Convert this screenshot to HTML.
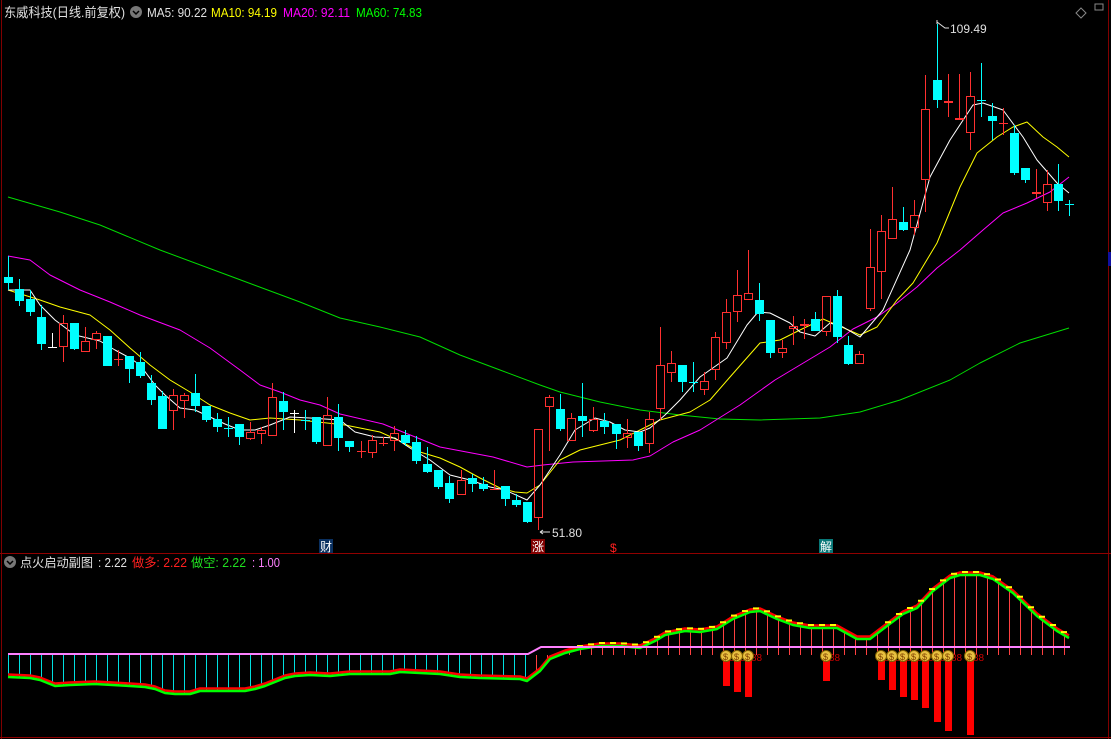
<!DOCTYPE html>
<html><head><meta charset="utf-8"><style>
html,body{margin:0;padding:0;background:#000;width:1111px;height:739px;overflow:hidden}
svg{display:block}
text{font-family:"Liberation Sans","Noto Sans CJK SC",sans-serif}
</style></head><body>
<svg id="s" width="1111" height="739" xmlns="http://www.w3.org/2000/svg">
<rect width="1111" height="739" fill="#000"/>
<line x1="1.5" y1="0" x2="1.5" y2="739" stroke="#800000"/>
<line x1="1108.5" y1="0" x2="1108.5" y2="739" stroke="#800000"/>
<rect x="1108" y="252" width="3" height="14" fill="#1010a0"/>
<line x1="0" y1="553.5" x2="1111" y2="553.5" stroke="#900000"/>
<line x1="0" y1="737.5" x2="1111" y2="737.5" stroke="#900000"/>
<text x="4" y="17" font-size="13" fill="#e0e0e0" textLength="121" lengthAdjust="spacingAndGlyphs">东威科技(日线.前复权)</text>
<circle cx="136" cy="12" r="6" fill="#777"/><path d="M133 11 l3 3 l3 -3" stroke="#000" stroke-width="1.5" fill="none"/>
<text x="147" y="17" font-size="12.5" fill="#e0e0e0" textLength="60" lengthAdjust="spacingAndGlyphs">MA5: 90.22</text>
<text x="211" y="17" font-size="12.5" fill="#ffff00" textLength="66" lengthAdjust="spacingAndGlyphs">MA10: 94.19</text>
<text x="283" y="17" font-size="12.5" fill="#ff00ff" textLength="67" lengthAdjust="spacingAndGlyphs">MA20: 92.11</text>
<text x="356" y="17" font-size="12.5" fill="#00ff00" textLength="66" lengthAdjust="spacingAndGlyphs">MA60: 74.83</text>
<path d="M1081 8 l5 5 l-5 5 l-5 -5z" stroke="#888" fill="none"/>
<rect x="1095" y="4" width="8" height="6" stroke="#888" fill="none"/>
<g id="g"></g>
<text x="950" y="33" font-size="12" fill="#e0e0e0">109.49</text>
<path d="M937 24 v-4 M937 22 l8 6 h4" stroke="#e0e0e0" fill="none"/>
<text x="552" y="537" font-size="12" fill="#e0e0e0">51.80</text>
<path d="M540 532 h10 M540 532 l3 -2 M540 532 l3 2" stroke="#e0e0e0" fill="none"/>
<rect x="319" y="539" width="14" height="14" fill="#0a3060"/><text x="320" y="551" font-size="12" fill="#fff">财</text>
<rect x="531" y="539" width="14" height="14" fill="#800000"/><text x="532" y="551" font-size="12" fill="#fff">涨</text>
<text x="610" y="552" font-size="12" fill="#ff2020">$</text>
<rect x="819" y="539" width="14" height="14" fill="#087878"/><text x="820" y="551" font-size="12" fill="#fff">解</text>
<circle cx="10" cy="562" r="6" fill="#777"/><path d="M7 561 l3 3 l3 -3" stroke="#000" stroke-width="1.5" fill="none"/>
<text x="20" y="567" font-size="12.5" fill="#e0e0e0" textLength="73" lengthAdjust="spacingAndGlyphs">点火启动副图</text>
<text x="98" y="567" font-size="12.5" fill="#e0e0e0" textLength="29" lengthAdjust="spacingAndGlyphs">: 2.22</text>
<text x="132" y="567" font-size="12.5" fill="#ff2020" textLength="55" lengthAdjust="spacingAndGlyphs">做多: 2.22</text>
<text x="191" y="567" font-size="12.5" fill="#20e020" textLength="55" lengthAdjust="spacingAndGlyphs">做空: 2.22</text>
<text x="252" y="567" font-size="12.5" fill="#ff80ff" textLength="28" lengthAdjust="spacingAndGlyphs">: 1.00</text>
</svg>
<script>
var NS="http://www.w3.org/2000/svg",g=document.getElementById('g');
function el(t,a){var e=document.createElementNS(NS,t);for(var k in a)e.setAttribute(k,a[k]);g.appendChild(e);return e;}
var C=[[8,277,283,256,290,'c'],[19,289,301,279,306,'c'],[30,299,312,290,316,'c'],[41,317,344,305,350,'c'],[52,347,348,333,348,'w'],[63,323,347,315,362,'r'],[74,323,349,323,350,'c'],[85,341,352,327,352,'r'],[96,333,340,331,349,'r'],[107,336,366,336,366,'c'],[118,359,360,350,366,'r'],[129,356,369,356,383,'c'],[140,362,376,352,378,'c'],[151,383,400,375,405,'c'],[162,396,429,391,429,'c'],[173,395,411,389,430,'r'],[184,395,401,393,418,'r'],[195,393,406,374,412,'c'],[206,406,420,406,422,'c'],[217,419,427,413,432,'c'],[228,428,429,417,437,'c'],[239,424,437,424,445,'c'],[250,432,439,422,440,'r'],[261,430,434,427,444,'r'],[272,397,436,383,436,'r'],[283,401,412,392,430,'c'],[294,413,414,410,433,'w'],[305,420,421,410,430,'c'],[316,417,442,417,444,'c'],[327,415,446,397,446,'r'],[338,417,438,404,451,'c'],[349,441,447,441,452,'c'],[361,451,452,441,458,'r'],[372,440,453,435,458,'r'],[383,443,444,437,446,'r'],[394,433,441,426,451,'r'],[405,435,443,430,446,'c'],[416,442,461,436,464,'c'],[427,464,472,447,473,'c'],[438,470,487,470,489,'c'],[449,483,499,476,503,'c'],[461,480,495,470,495,'r'],[472,478,484,474,492,'c'],[483,484,489,477,491,'c'],[494,489,490,470,490,'r'],[505,486,499,486,506,'c'],[516,500,505,494,507,'c'],[527,502,522,502,523,'c'],[538,429,518,429,530,'r'],[549,397,407,395,451,'r'],[560,409,429,394,431,'c'],[571,418,441,413,441,'r'],[582,416,421,383,437,'c'],[593,419,431,407,432,'r'],[604,421,427,413,434,'c'],[616,424,434,424,449,'c'],[627,433,438,419,448,'r'],[638,432,446,432,451,'c'],[649,419,444,412,453,'r'],[660,365,409,327,420,'r'],[671,363,373,351,382,'r'],[682,365,382,365,392,'c'],[693,382,383,362,392,'c'],[704,381,390,372,395,'r'],[715,337,370,332,380,'r'],[726,312,343,299,349,'r'],[737,295,312,270,322,'r'],[748,293,300,250,300,'r'],[759,300,314,283,321,'c'],[770,320,353,320,358,'c'],[782,348,353,340,358,'r'],[793,326,329,316,345,'r'],[804,324,326,319,339,'r'],[815,319,331,312,331,'c'],[826,296,332,296,336,'r'],[837,296,337,290,343,'c'],[848,345,364,336,365,'c'],[859,354,364,351,364,'r'],[870,267,309,229,311,'r'],[881,231,272,215,299,'r'],[892,219,239,187,239,'r'],[903,222,230,207,231,'c'],[914,215,228,200,235,'r'],[925,109,180,75,212,'r'],[937,80,100,24,108,'c'],[948,101,103,74,117,'r'],[959,118,120,74,120,'r'],[970,96,133,72,150,'r'],[981,100,101,63,117,'c'],[992,116,121,103,140,'c'],[1003,123,124,108,135,'r'],[1014,133,173,125,175,'c'],[1025,168,180,168,183,'c'],[1036,192,194,169,198,'r'],[1047,184,203,170,211,'r'],[1058,184,201,164,211,'c'],[1069,204,205,200,216,'c']];
function pl(pts,col,w){el('polyline',{points:pts.map(p=>p.join(',')).join(' '),fill:'none',stroke:col,'stroke-width':w||1,'stroke-linejoin':'round'});}
pl([[8,197],[60,212],[100,225],[160,250],[230,276],[300,302],[340,318],[380,327],[420,337],[460,355],[500,370],[540,385],[560,392],[600,402],[640,410],[680,415],[720,419],[760,420],[820,418],[860,412],[900,400],[950,380],[980,363],[1020,343],[1069,328]],'#00dd00');
pl([[8,256],[30,260],[50,275],[80,290],[110,302],[140,315],[180,330],[210,348],[240,370],[260,385],[280,392],[300,400],[320,405],[340,414],[383,424],[440,447],[493,457],[527,467],[543,465],[573,462],[633,460],[650,456],[673,442],[700,430],[740,405],[775,380],[800,365],[830,347],[853,329],[877,317],[897,303],[917,287],[937,268],[960,250],[983,230],[1003,213],[1027,203],[1050,192],[1069,177]],'#ff00ff');
pl([[8,290],[40,300],[60,307],[90,315],[110,330],[130,348],[150,365],[170,380],[190,392],[210,405],[230,413],[250,420],[270,418],[300,420],[345,425],[380,432],[400,441],[420,452],[440,458],[460,467],[480,478],[500,488],[515,492],[527,493],[540,485],[560,460],[580,450],[600,445],[620,440],[640,430],[660,420],[690,412],[710,400],[730,377],[760,343],[780,340],[800,330],[823,319],[837,325],[860,335],[877,327],[897,300],[913,283],[937,243],[960,187],[977,153],[997,137],[1013,127],[1027,122],[1043,137],[1057,147],[1069,157]],'#ffff00');
pl([[8,290],[30,290],[40,305],[55,320],[75,335],[100,341],[115,350],[130,358],[140,365],[155,385],[165,395],[180,408],[195,410],[210,417],[225,424],[240,430],[255,430],[270,425],[290,417],[310,418],[340,420],[355,432],[375,437],[395,438],[410,448],[430,460],[450,475],[470,480],[490,487],[505,490],[527,500],[540,485],[560,455],[575,430],[595,418],[610,422],[625,430],[640,432],[650,428],[665,415],[680,400],[700,377],[727,358],[747,325],[758,312],[770,313],[790,323],[800,332],[815,336],[830,323],[843,327],[860,337],[883,310],[910,250],[930,177],[950,140],[973,105],[983,103],[1003,110],[1023,137],[1037,160],[1057,183],[1069,193]],'#ffffff');
C.forEach(function(c){var x=c[0],col=c[5]=='c'?'#00ffff':c[5]=='r'?'#ff3030':'#ffffff';
 if(c[5]=='c'){el('line',{x1:x+.5,y1:c[3],x2:x+.5,y2:c[4],stroke:col});el('rect',{x:x-4,y:c[1],width:9,height:Math.max(1,c[2]-c[1]),fill:col});}
 else{el('line',{x1:x+.5,y1:c[3],x2:x+.5,y2:c[1],stroke:col});el('line',{x1:x+.5,y1:c[2],x2:x+.5,y2:c[4],stroke:col});
 if(c[2]-c[1]<=1)el('line',{x1:x-4,y1:c[1]+.5,x2:x+5,y2:c[1]+.5,stroke:col});else el('rect',{x:x-3.5,y:c[1]+.5,width:8,height:c[2]-c[1]-1,fill:'none',stroke:col});}});
var L=[[8,676],[30,677],[40,679],[50,683],[55,685],[70,684],[95,683],[130,685],[145,686],[155,688],[165,692],[175,693],[190,693],[200,690],[245,690],[255,688],[265,685],[275,681],[285,677],[295,675],[310,674],[330,675],[350,673],[390,673],[400,671],[420,672],[440,673],[460,676],[480,677],[520,678],[527,680],[540,670],[550,658],[565,652],[580,648],[600,645],[620,645],[640,647],[655,640],[665,634],[685,630],[700,631],[717,628],[733,618],[750,611],[760,610],[777,618],[793,624],[810,627],[837,627],[857,638],[870,638],[887,625],[903,613],[917,607],[933,590],[950,577],[960,574],[980,574],[993,578],[1013,592],[1037,615],[1057,630],[1069,637]];
function yAt(x){for(var i=1;i<L.length;i++)if(x<=L[i][0]){var a=L[i-1],b=L[i];return a[1]+(b[1]-a[1])*(x-a[0])/((b[0]-a[0])||1);}return L[L.length-1][1];}
for(var x=8;x<=1070;x+=11){var y=yAt(x);
 if(x<=530)el('line',{x1:x+.5,y1:654,x2:x+.5,y2:y,stroke:'#00e0e0'});
 else el('line',{x1:x+.5,y1:y,x2:x+.5,y2:655,stroke:'#ff4040'});}
pl(L.map(p=>[p[0],p[1]-1.5]),'#ff0000',2.5);
pl(L.map(p=>[p[0],p[1]+1]),'#00ff00',2.5);
for(var x=580;x<=1070;x+=11){if(x>840&&x<880)continue;var y=yAt(x);el('rect',{x:x-3,y:y-3,width:6,height:2,fill:'#ffff00'});}
pl([[8,654],[528,654],[541,647],[1070,647]],'#ff80ff',2);
var B=[[726,686],[737,692],[748,697],[826,681],[881,680],[892,690],[903,697],[914,700],[925,708],[937,722],[948,731],[970,735]];
B.forEach(function(b){el('rect',{x:b[0]-3,y:660,width:7,height:b[1]-660,fill:'#ff0000'});
 el('text',{x:b[0]+3,y:661,'font-size':10,fill:'#d00000'}).textContent='88';
 el('circle',{cx:b[0],cy:656,r:5.5,fill:'#e8c040',stroke:'#806000'});
 el('text',{x:b[0]-3,y:660,'font-size':9,fill:'#804000'}).textContent='$';});
</script>
</body></html>
